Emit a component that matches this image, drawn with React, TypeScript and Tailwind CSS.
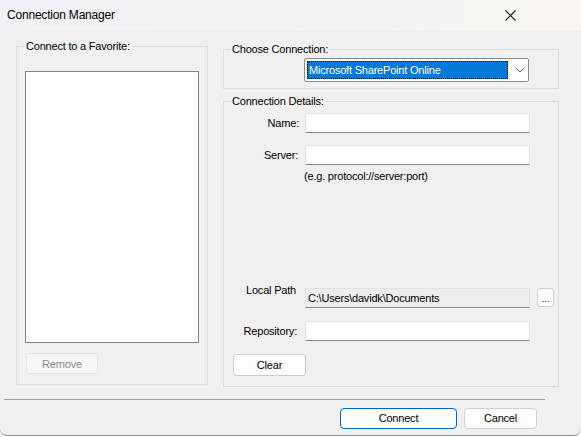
import React from 'react';

const font = { fontFamily: '"Liberation Sans", Arial, sans-serif' };

const TextBox = ({ value, readOnly }: { value?: string; readOnly?: boolean }) => (
  <div
    className={`w-[225px] h-[20px] border border-[#e2e2e2] border-b-[#8a8a8a] flex items-center pl-[2px] text-[11px] text-black ${
      readOnly ? 'bg-[#ededed]' : 'bg-white'
    }`}
  >
    {value}
  </div>
);

const CloseIcon = () => (
  <svg width="11" height="11" viewBox="0 0 11 11" fill="none">
    <path d="M0.5 0.5L10.5 10.5M10.5 0.5L0.5 10.5" stroke="#1a1a1a" strokeWidth="1.1" />
  </svg>
);

const Chevron = () => (
  <svg width="10" height="6" viewBox="0 0 10 6" fill="none">
    <path d="M0.5 0.5L5 5L9.5 0.5" stroke="#606060" strokeWidth="1" />
  </svg>
);

export default function App() {
  return (
    <div className="w-[581px] h-[437px] bg-white" style={font}>
      <div className="w-[581px] h-[436px] flex flex-col bg-[#f0f0f0] border-b border-[#8e8e8e] rounded-b-[7px] overflow-hidden tracking-[-0.2px]">
        {/* title bar */}
        <div className="h-[30px] flex items-center justify-between pl-[7px] pr-[65px] bg-linear-to-r from-[#f2f1f6] to-[#f8f5f1]">
          <span className="text-[12px] text-black">Connection Manager</span>
          <CloseIcon />
        </div>

        <div className="flex px-[16px] pt-[9px] gap-[15px] text-[11px] text-black leading-[14px]">
          {/* favorites */}
          <fieldset className="w-[192px] h-[346px] border border-[#dcdcdc]">
            <legend className="ml-[7px] px-[2px] leading-[14px]">Connect to a Favorite:</legend>
            <div className="ml-[8px] mt-[18px] w-[174px] h-[272px] bg-white border border-[#828282]" />
            <button className="ml-[9px] mt-[10px] w-[72px] h-[21px] rounded-[3px] border border-[#e6e6e6] bg-[#f6f6f6] text-[#8c8c8c]">
              Remove
            </button>
          </fieldset>

          <div className="flex flex-col w-[336px] pt-[3px]">
            {/* choose connection */}
            <fieldset className="h-[47px] border border-[#dcdcdc]">
              <legend className="ml-[7px] px-[1px] leading-[14px]">Choose Connection:</legend>
              <div className="ml-[80px] mt-[2px] w-[225px] h-[24px] bg-white border border-[#8c8c8c] rounded-[2px] flex items-center pl-[2px]">
                <div className="w-[201px] h-[18px] bg-[#0078d7] border border-dotted border-black text-white flex items-center pl-[1px]">
                  Microsoft SharePoint Online
                </div>
                <div className="ml-[7px]">
                  <Chevron />
                </div>
              </div>
            </fieldset>

            {/* details */}
            <fieldset className="mt-[5px] h-[293px] border border-[#dcdcdc]">
              <legend className="ml-[7px] px-[1px] leading-[14px]">Connection Details:</legend>
              <div className="flex flex-col">
                <div className="mt-[5px] flex items-center">
                  <span className="w-[75px] text-right">Name:</span>
                  <div className="ml-[6px]">
                    <TextBox />
                  </div>
                </div>
                <div className="mt-[12px] flex items-center">
                  <span className="w-[75px] text-right pr-[1px]">Server:</span>
                  <div className="ml-[6px]">
                    <TextBox />
                  </div>
                </div>
                <div className="mt-[4px] ml-[80px]">(e.g. protocol://server:port)</div>
                <div className="mt-[105px] flex items-start">
                  <span className="w-[75px] text-right pr-[3px] -mt-[5px]">Local Path</span>
                  <div className="ml-[6px]">
                    <TextBox value="C:\Users\davidk\Documents" readOnly />
                  </div>
                  <button className="ml-[7px] w-[17px] h-[19px] rounded-[3px] border border-[#cfcfcf] bg-[#fdfdfd] text-[9px] leading-[14px] flex items-end justify-center">
                    ...
                  </button>
                </div>
                <div className="mt-[13px] flex items-center">
                  <span className="w-[75px] text-right pr-[2px]">Repository:</span>
                  <div className="ml-[6px]">
                    <TextBox />
                  </div>
                </div>
                <button className="mt-[13px] ml-[9px] w-[73px] h-[22px] rounded-[3px] border border-[#cccccc] bg-[#fdfdfd]">
                  Clear
                </button>
              </div>
            </fieldset>
          </div>
        </div>

        {/* separator */}
        <div className="mt-[12px] ml-[4px] w-[541px] h-px bg-[#a0a0a0]" />

        {/* footer buttons */}
        <div className="mt-[8px] flex justify-end pr-[44px] gap-[7px] text-[11px] text-black">
          <button className="w-[117px] h-[21px] rounded-[4px] border border-[#0067c0] bg-[#fdfdfd]">Connect</button>
          <button className="w-[73px] h-[21px] rounded-[4px] border border-[#d0d0d0] bg-[#fdfdfd]">Cancel</button>
        </div>
      </div>
    </div>
  );
}
